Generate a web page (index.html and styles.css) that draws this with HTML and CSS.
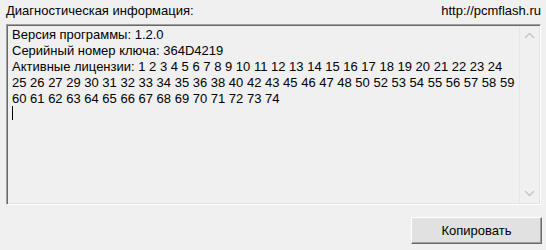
FILE: index.html
```html
<!DOCTYPE html>
<html lang="ru">
<head>
    <meta charset="UTF-8">
    <title>Диагностическая информация</title>
    <link rel="stylesheet" href="styles.css">
</head>
<body>
    <div class="window">
        <div class="header">
            <span class="label">Диагностическая информация:</span>
            <span class="link">http://pcmflash.ru</span>
        </div>
        <div class="info-box">
            <div class="info-text">
                <div>Версия программы: 1.2.0</div>
                <div>Серийный номер ключа: 364D4219</div>
                <div>Активные лицензии: 1 2 3 4 5 6 7 8 9 10 11 12 13 14 15 16 17 18 19 20 21 22 23 24 25 26 27 29 30 31 32 33 34 35 36 38 40 42 43 45 46 47 48 50 52 53 54 55 56 57 58 59 60 61 62 63 64 65 66 67 68 69 70 71 72 73 74</div>
                <div class="caret-line"><span class="caret"></span></div>
            </div>
            <div class="scrollbar">
                <svg class="arrow" width="11" height="7" viewBox="0 0 11 7"><path d="M1 6 L5.5 1.5 L10 6" fill="none" stroke="#c5c5c5" stroke-width="1.4"/></svg>
                <svg class="arrow" width="11" height="7" viewBox="0 0 11 7"><path d="M1 1 L5.5 5.5 L10 1" fill="none" stroke="#c5c5c5" stroke-width="1.4"/></svg>
            </div>
        </div>
        <div class="footer">
            <button class="copy-btn">Копировать</button>
        </div>
    </div>
</body>
</html>
```

FILE: styles.css
```css
body {
    margin: 0;
    background-color: #f0f0f0;
    font-family: 'Liberation Sans', Arial, sans-serif;
    font-size: 13px;
    color: #000;
}
.window {
    width: 546px;
    height: 250px;
}
.header {
    display: flex;
    justify-content: space-between;
    padding: 3px 5px 0 6px;
    height: 21px;
    line-height: 16px;
}
.info-box {
    display: flex;
    margin-left: 6px;
    width: 535px;
    height: 181px;
    box-sizing: border-box;
    border: 1px solid;
    border-color: #a0a0a0 #ffffff #ffffff #a0a0a0;
    box-shadow: inset 1px 1px 0 #696969, inset -1px -1px 0 #e3e3e3;
}
.info-text {
    flex: 1;
    padding: 2px 4px 0 5px;
    line-height: 16px;
}
.caret-line {
    height: 16px;
}
.caret {
    display: inline-block;
    width: 1px;
    height: 14px;
    margin-top: -1px;
    background-color: #000;
}
.scrollbar {
    width: 19px;
    margin: 1px 1px 1px 0;
    border-left: 1px solid #e6e6e6;
    display: flex;
    flex-direction: column;
    justify-content: space-between;
    align-items: center;
    padding: 6px 0;
}
.footer {
    display: flex;
    justify-content: flex-end;
    padding: 12px 4px 0 0;
}
.copy-btn {
    width: 131px;
    height: 27px;
    font-family: 'Liberation Sans', Arial, sans-serif;
    font-size: 13px;
    color: #000;
    background-color: #e1e1e1;
    border: 1px solid;
    border-color: #ffffff #696969 #696969 #ffffff;
    box-shadow: inset -1px -1px 0 #a0a0a0, inset 1px 1px 0 #e3e3e3;
    padding: 0;
}
```
